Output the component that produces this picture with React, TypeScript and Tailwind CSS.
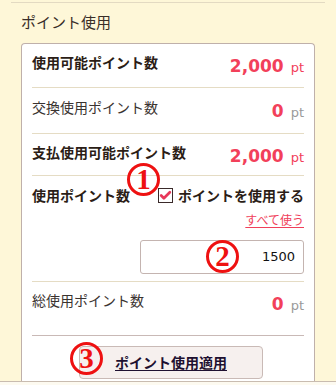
import { Check } from "lucide-react";

const jp = "font-['Noto_Sans_CJK_JP','Noto_Sans',sans-serif]";
const num = "font-['DejaVu_Sans',sans-serif]";

const Marker = ({ n, className }: { n: string; className: string }) => (
  <span
    className={`absolute flex h-[33px] w-[33px] items-center justify-center rounded-full border-[3px] border-[#ee1111] text-[29px] leading-none font-bold text-[#ee1111] font-['Liberation_Serif',serif] ${className}`}
  >
    <span className="-mt-[1px]">{n}</span>
  </span>
);

const Points = ({ value, zero }: { value: string; zero?: boolean }) => (
  <span className={`${num} mt-[4px] whitespace-nowrap leading-[20px]`}>
    <span className="text-[17px] font-bold text-[#f2405a]">{value}</span>
    <span className={`ml-[7px] text-[13px] ${zero ? "text-[#9a9a9a]" : "text-[#f2405a]"}`}>pt</span>
  </span>
);

export default function App() {
  const rows = [
    { label: "使用可能ポイント数", value: "2,000", bold: true, h: "h-[44px] pt-[8px]" },
    { label: "交換使用ポイント数", value: "0", bold: false, zero: true, h: "h-[46px] pt-[9px]" },
    { label: "支払使用可能ポイント数", value: "2,000", bold: true, h: "h-[42px] pt-[8px]" },
  ];

  return (
    <div className={`h-[385px] w-[336px] overflow-hidden bg-[#fef7d8] ${jp} text-[#2b1d16]`}>
      <div className="mx-[11px] mt-[2px] border-t border-[#e3dac2]">
        <h2 className="pl-[10px] pt-[8px] text-[15px] leading-[22px] font-normal text-[#3a2e28]">ポイント使用</h2>
        <div className="mx-[10px] mt-[10px] h-[338px] rounded-t-[4px] border border-b-0 border-[#bfb0aa] bg-white px-[10px]">
          {rows.map((r) => (
            <div
              key={r.label}
              className={`flex items-start justify-between border-b border-[#e5dcc4] ${r.h}`}
            >
              <span className={`text-[14px] leading-[20px] ${r.bold ? "font-bold" : "text-[#3a3330]"}`}>{r.label}</span>
              <Points value={r.value} zero={r.zero} />
            </div>
          ))}

          {/* 使用ポイント数 */}
          <div className="h-[106px] border-b border-[#e5dcc4] pt-[9px]">
            <div className="relative flex items-center justify-between">
              <span className="text-[14px] leading-[20px] font-bold">使用ポイント数</span>
              <label className="flex items-center gap-[5px]">
                <span className="flex h-[15px] w-[15px] items-center justify-center border border-[#3a2a2a] bg-white">
                  <Check className="h-[13px] w-[13px] text-[#e8385a]" strokeWidth={5} />
                </span>
                <span className="text-[14px] leading-[20px] font-bold">ポイントを使用する</span>
              </label>
              <Marker n="1" className="left-[95px] -top-[22px]" />
            </div>
            <div className="mt-[6px] flex justify-end">
              <a className="text-[12px] leading-[18px] text-[#f0405a] underline underline-offset-2">すべて使う</a>
            </div>
            <div className="relative mt-[11px] ml-auto flex h-[34px] w-[164px] items-center justify-end rounded-[3px] border border-[#c4b4b0] bg-white pr-[8px]">
              <span className={`${num} text-[13px] text-[#111]`}>1500</span>
              <Marker n="2" className="left-[65px] top-[-1px]" />
            </div>
          </div>

          {/* 総使用ポイント数 */}
          <div className="flex h-[54px] items-start justify-between border-b border-[#c9b9b6] pt-[8px]">
            <span className="text-[14px] leading-[20px] text-[#3a3330]">総使用ポイント数</span>
            <Points value="0" zero />
          </div>

          <div className="relative flex justify-center pt-[10px]">
            <button className="ml-[6px] flex h-[33px] w-[184px] items-center justify-center rounded-[4px] border border-[#c9bab6] bg-[#f6f0ee] text-[14px] font-bold text-[#1e1030] underline underline-offset-2">
              ポイント使用適用
            </button>
            <Marker n="3" className="left-[38px] top-[6px]" />
          </div>
        </div>
      </div>
      <div className="-mx-[11px] border-t border-[#c9bcb0] bg-[#fdfaf0] h-[4px]" />
    </div>
  );
}
